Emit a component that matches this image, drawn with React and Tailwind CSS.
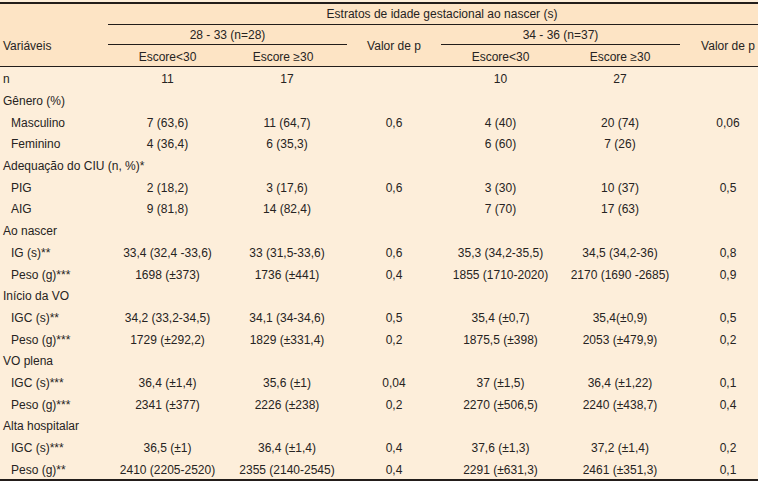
const cols = "grid grid-cols-[108px_119px_120px_94px_119px_120px_78px]";

const rows = [
  { label: "n", vals: ["11", "17", "", "10", "27", ""] },
  { group: "Gênero (%)" },
  { label: "Masculino", sub: true, vals: ["7 (63,6)", "11 (64,7)", "0,6", "4 (40)", "20 (74)", "0,06"] },
  { label: "Feminino", sub: true, vals: ["4 (36,4)", "6 (35,3)", "", "6 (60)", "7 (26)", ""] },
  { group: "Adequação do CIU (n, %)*" },
  { label: "PIG", sub: true, vals: ["2 (18,2)", "3 (17,6)", "0,6", "3 (30)", "10 (37)", "0,5"] },
  { label: "AIG", sub: true, vals: ["9 (81,8)", "14 (82,4)", "", "7 (70)", "17 (63)", ""] },
  { group: "Ao nascer" },
  { label: "IG (s)**", sub: true, vals: ["33,4 (32,4 -33,6)", "33 (31,5-33,6)", "0,6", "35,3 (34,2-35,5)", "34,5 (34,2-36)", "0,8"] },
  { label: "Peso (g)***", sub: true, vals: ["1698 (±373)", "1736 (±441)", "0,4", "1855 (1710-2020)", "2170 (1690 -2685)", "0,9"] },
  { group: "Início da VO" },
  { label: "IGC (s)**", sub: true, vals: ["34,2 (33,2-34,5)", "34,1 (34-34,6)", "0,5", "35,4 (±0,7)", "35,4(±0,9)", "0,5"] },
  { label: "Peso (g)***", sub: true, vals: ["1729 (±292,2)", "1829 (±331,4)", "0,2", "1875,5 (±398)", "2053 (±479,9)", "0,2"] },
  { group: "VO plena" },
  { label: "IGC (s)***", sub: true, vals: ["36,4 (±1,4)", "35,6 (±1)", "0,04", "37 (±1,5)", "36,4 (±1,22)", "0,1"] },
  { label: "Peso (g)***", sub: true, vals: ["2341 (±377)", "2226 (±238)", "0,2", "2270 (±506,5)", "2240 (±438,7)", "0,4"] },
  { group: "Alta hospitalar" },
  { label: "IGC (s)***", sub: true, vals: ["36,5 (±1)", "36,4 (±1,4)", "0,4", "37,6 (±1,3)", "37,2 (±1,4)", "0,2"] },
  { label: "Peso (g)**", sub: true, vals: ["2410 (2205-2520)", "2355 (2140-2545)", "0,4", "2291 (±631,3)", "2461 (±351,3)", "0,1"] },
];

export default function App() {
  return (
    <div className="w-[758px] h-[481px] bg-[#fdeeda] pt-[2px] text-[12px] leading-[14px] text-[#262322] font-['Liberation_Sans',Arial,sans-serif] overflow-hidden">
      {/* Header */}
      <div className={`${cols} grid-rows-[21px_20px_21px] bg-[#fde4c5] border-t-2 border-b border-[#231d1a]`}>
        <div />
        <div className="col-span-6 border-b border-[#231d1a] flex items-center justify-center pl-[18px]">
          Estratos de idade gestacional ao nascer (s)
        </div>
        <div className="row-span-2 flex items-center pl-[3px]">Variáveis</div>
        <div className="col-span-2 border-b border-[#231d1a] flex items-center justify-center">28 - 33 (n=28)</div>
        <div className="row-span-2 flex items-center justify-center">Valor de p</div>
        <div className="col-span-2 border-b border-[#231d1a] flex items-center justify-center">34 - 36 (n=37)</div>
        <div className="row-span-2 flex items-center justify-center pl-[18px]">Valor de p</div>
        <div className="flex items-center justify-center pt-[2px]">Escore&lt;30</div>
        <div className="flex items-center justify-center pt-[2px] pr-[8px]">Escore ≥30</div>
        <div className="flex items-center justify-center pt-[2px]">Escore&lt;30</div>
        <div className="flex items-center justify-center pt-[2px]">Escore ≥30</div>
      </div>

      {/* Body */}
      <div className="border-b-2 border-[#231d1a]">
        {rows.map((r, i) =>
          r.group ? (
            <div key={i} className="h-[21.7px] pt-[3px] flex items-center pl-[3px] whitespace-nowrap">
              {r.group}
            </div>
          ) : (
            <div key={i} className={`${cols} h-[21.7px] pt-[3px] items-center`}>
              <div className={r.sub ? "pl-[11px] whitespace-nowrap" : "pl-[3px]"}>{r.label}</div>
              {r.vals.map((v, j) => (
                <div
                  key={j}
                  className={`text-center whitespace-nowrap ${j === 5 ? "pl-[18px]" : ""}`}
                >
                  {v}
                </div>
              ))}
            </div>
          )
        )}
      </div>
    </div>
  );
}
